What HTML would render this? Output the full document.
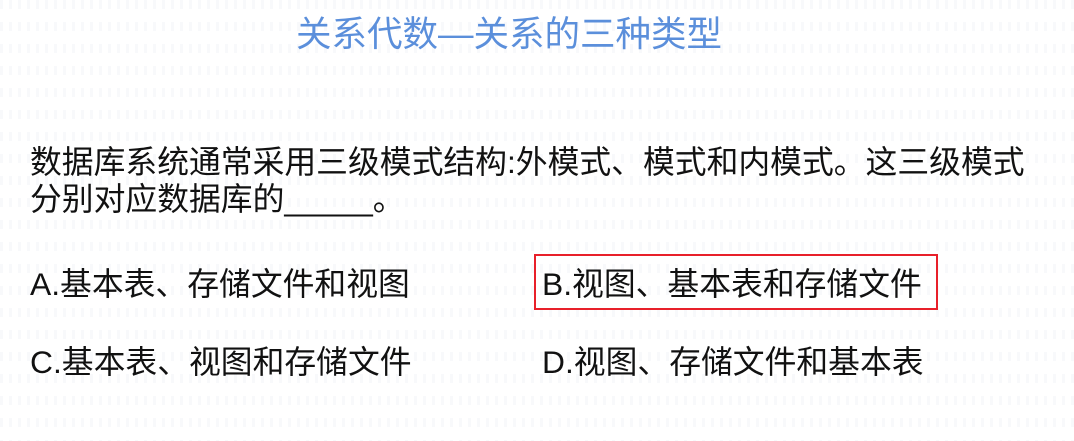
<!DOCTYPE html>
<html><head><meta charset="utf-8"><style>
html,body{margin:0;padding:0}
body{width:1074px;height:441px;position:relative;overflow:hidden;background:#fff;
font-family:"Liberation Sans","Noto Sans CJK SC",sans-serif;}
.bg{position:absolute;inset:0;background:
repeating-linear-gradient(90deg,rgba(200,210,225,0.35) 0 3px,transparent 3px 9px);
-webkit-mask:repeating-linear-gradient(180deg,#000 0 9px,transparent 9px 22px);opacity:.4}
.t{position:absolute;white-space:nowrap;color:#111}
.title{left:296px;top:6px;font-size:35.5px;color:#5b8fdb}
.q{left:30px;top:144px;font-size:31.8px;line-height:37px}
.o{font-size:31.8px}
.box{position:absolute;left:534px;top:254px;width:400px;height:52px;border:2px solid #e8202a}
</style></head><body>
<div class="bg"></div>
<div class="t title">关系代数—关系的三种类型</div>
<div class="t q">数据库系统通常采用三级模式结构:外模式、模式和内模式。这三级模式<br>分别对应数据库的_____。</div>
<div class="t o" style="left:30px;top:259px">A.基本表、存储文件和视图</div>
<div class="t o" style="left:542px;top:259px">B.视图、基本表和存储文件</div>
<div class="t o" style="left:30px;top:337px">C.基本表、视图和存储文件</div>
<div class="t o" style="left:542px;top:337px">D.视图、存储文件和基本表</div>
<div class="box"></div>
</body></html>
